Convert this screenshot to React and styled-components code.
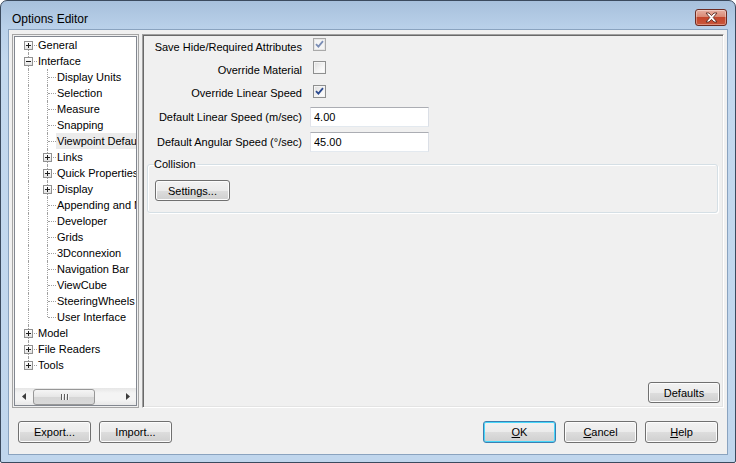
import React from 'react';
import styled, { createGlobalStyle } from 'styled-components';

const GlobalStyle = createGlobalStyle`
  html, body {
    margin: 0;
    padding: 0;
    background: #ffffff;
  }
  * {
    box-sizing: border-box;
  }
`;

const Window = styled.div`
  width: 736px;
  height: 463px;
  display: flex;
  flex-direction: column;
  padding: 0 7px 7px 7px;
  border: 1px solid #3b4a5e;
  border-radius: 7px 7px 2px 2px;
  background: linear-gradient(#a7c0dc 0, #bad1ea 28px, #c3d8ee 60px, #c0d6ed 100%);
  font-family: 'Liberation Sans', Arial, sans-serif;
  font-size: 11px;
  color: #000;
`;

const TitleBar = styled.div`
  height: 28px;
  display: flex;
  align-items: center;
  justify-content: space-between;
  padding: 0 0 0 4px;
`;

const Title = styled.div`
  font-size: 12px;
  color: #000;
  padding-top: 7px;
`;

const CloseButton = styled.div`
  width: 32px;
  height: 17px;
  margin-top: 5px;
  margin-right: 1px;
  border: 1px solid #6e2c22;
  border-radius: 3px;
  display: flex;
  align-items: center;
  justify-content: center;
  background: linear-gradient(#e7b0a2 0, #d98a76 45%, #c4462c 50%, #c9573c 100%);
  box-shadow: inset 0 0 0 1px rgba(255, 255, 255, 0.35);
`;

const Body = styled.div`
  flex: 1;
  display: flex;
  flex-direction: column;
  background: #f0f0f0;
  border: 1px solid #8aa3bf;
  padding: 4px 0 0 0;
`;

const Main = styled.div`
  flex: 1;
  display: flex;
  gap: 3px;
  padding: 0 3px;
  min-height: 0;
`;

const TreeFrame = styled.div`
  width: 127px;
  border: 1px solid #a5a5a5;
  padding: 1px;
  display: flex;
`;

const TreeInner = styled.div`
  flex: 1;
  border: 1px solid #828790;
  background: #fff;
  display: flex;
  flex-direction: column;
  overflow: hidden;
`;

const TreeList = styled.div`
  flex: 1;
  padding-left: 3px;
  overflow: hidden;
`;

const TreeRow = styled.div`
  height: 16px;
  display: flex;
  align-items: stretch;
  white-space: nowrap;
`;

const LineCell = styled.span`
  position: relative;
  flex: none;
  width: 19px;
  height: 16px;

  &::before {
    content: '';
    position: absolute;
    left: 10px;
    top: ${(p) => (p.$type === 'first' ? '8px' : '0')};
    height: ${(p) =>
      p.$type === 'none' ? '0' : p.$type === 'first' || p.$type === 'ell' ? '8px' : '16px'};
    border-left: 1px dotted #a0a0a0;
    display: ${(p) => (p.$type === 'none' ? 'none' : 'block')};
  }

  &::after {
    content: '';
    position: absolute;
    left: 11px;
    right: 0;
    top: 8px;
    border-top: 1px dotted #a0a0a0;
    display: ${(p) => (p.$type === 'pipe' || p.$type === 'none' ? 'none' : 'block')};
  }
`;

const Expander = styled.span`
  position: absolute;
  left: 6px;
  top: 4px;
  width: 9px;
  height: 9px;
  border: 1px solid #919191;
  background: linear-gradient(#ffffff, #e3e3e3);
  z-index: 1;

  &::before {
    content: '';
    position: absolute;
    left: 1px;
    top: 3px;
    width: 5px;
    height: 1px;
    background: #1e1e1e;
  }

  &::after {
    content: '';
    position: absolute;
    left: 3px;
    top: 1px;
    width: 1px;
    height: 5px;
    background: #1e1e1e;
    display: ${(p) => (p.$open ? 'none' : 'block')};
  }
`;

const TreeLabel = styled.span`
  padding: 0 2px 0 1px;
  line-height: 16px;
  background: ${(p) => (p.$selected ? '#ebebeb' : 'transparent')};
`;

const HScroll = styled.div`
  height: 17px;
  display: flex;
  background: linear-gradient(#e6e6e6, #f4f4f4 30%, #f4f4f4 70%, #e8e8e8);
  flex: none;
`;

const ScrollArrow = styled.span`
  width: 17px;
  display: flex;
  align-items: center;
  justify-content: center;
`;

const ScrollTrack = styled.div`
  flex: 1;
  display: flex;
  align-items: center;
  padding-left: 1px;
`;

const ScrollThumb = styled.div`
  width: 62px;
  height: 16px;
  border: 1px solid #979797;
  border-radius: 3px;
  background: linear-gradient(#f5f5f5, #e6e6e6 50%, #d6d6d6 51%, #d9d9d9);
  display: flex;
  align-items: center;
  justify-content: center;
  gap: 2px;
`;

const Grip = styled.span`
  width: 1px;
  height: 6px;
  background: #5e5e5e;
  box-shadow: 1px 0 0 #f6f6f6;
`;

const Panel = styled.div`
  flex: 1;
  display: flex;
  flex-direction: column;
  border: 1px solid;
  border-color: #a0a0a0 #ffffff #ffffff #a0a0a0;
  box-shadow: inset 1px 1px 0 #696969, inset -1px -1px 0 #e3e3e3;
  padding: 0 3px 4px 1px;
`;

const Form = styled.div`
  display: grid;
  grid-template-columns: 158px 1fr;
  grid-template-rows: 23px 23px 23px 25px 25px;
  column-gap: 8px;
  align-items: center;
`;

const FieldLabel = styled.label`
  text-align: right;
  white-space: nowrap;
  padding-top: 1px;
`;

const CheckBox = styled.span`
  align-self: start;
  width: 13px;
  height: 13px;
  margin: ${(p) => p.$top || 3}px 0 0 3px;
  border: 1px solid ${(p) => (p.$muted ? '#a9a9a9' : '#8e8f8f')};
  background: ${(p) =>
    p.$muted ? '#f4f4f4' : 'linear-gradient(135deg, #dcdcdc, #f6f6f6 60%, #ffffff)'};
  box-shadow: inset 0 0 0 1px ${(p) => (p.$muted ? '#e6e6e6' : '#f4f4f4')};
  display: flex;
  align-items: center;
  justify-content: center;
`;

const TextBox = styled.input`
  width: 119px;
  height: 20px;
  border: 1px solid;
  border-color: #abadb3 #dbdfe6 #e3e9ef #e2e3ea;
  padding: 0 3px;
  font-family: inherit;
  font-size: 11px;
  color: #000;
  background: #fff;
  outline: none;
`;

const Group = styled.fieldset`
  margin: 4px 2px 0 3px;
  padding: 10px 7px 11px 7px;
  border: 1px solid #d5dfe5;
  border-radius: 3px;
  box-shadow: inset 1px 1px 0 #fff, 1px 1px 0 #fff;
`;

const Legend = styled.legend`
  padding: 0 1px 0 0;
  margin-left: -1px;
`;

const Button = styled.button`
  width: ${(p) => p.$w || 73}px;
  height: ${(p) => p.$h || 22}px;
  border: 1px solid ${(p) => (p.$default ? '#3c7fb1' : '#707070')};
  border-radius: 3px;
  background: linear-gradient(#f2f2f2 0, #ebebeb 50%, #dddddd 51%, #cfcfcf 100%);
  box-shadow: inset 0 0 0 1px ${(p) => (p.$default ? '#48d7fa' : '#fcfcfc')};
  font-family: inherit;
  font-size: 11px;
  color: #000;
  padding: 0;
  flex: none;

  u {
    text-decoration: underline;
    text-underline-offset: 1px;
  }
`;

const PanelFooter = styled.div`
  margin-top: auto;
  display: flex;
  justify-content: flex-end;
`;

const Footer = styled.div`
  display: flex;
  align-items: center;
  padding: 13px 9px 11px 9px;
  gap: 8px;
`;

const Spacer = styled.div`
  flex: 1;
`;

const tree = [
  { label: 'General', lines: ['first'], box: 'closed' },
  { label: 'Interface', lines: ['tee'], box: 'open' },
  { label: 'Display Units', lines: ['pipe', 'tee'] },
  { label: 'Selection', lines: ['pipe', 'tee'] },
  { label: 'Measure', lines: ['pipe', 'tee'] },
  { label: 'Snapping', lines: ['pipe', 'tee'] },
  { label: 'Viewpoint Defaults', lines: ['pipe', 'tee'], selected: true },
  { label: 'Links', lines: ['pipe', 'tee'], box: 'closed' },
  { label: 'Quick Properties', lines: ['pipe', 'tee'], box: 'closed' },
  { label: 'Display', lines: ['pipe', 'tee'], box: 'closed' },
  { label: 'Appending and Merging', lines: ['pipe', 'tee'] },
  { label: 'Developer', lines: ['pipe', 'tee'] },
  { label: 'Grids', lines: ['pipe', 'tee'] },
  { label: '3Dconnexion', lines: ['pipe', 'tee'] },
  { label: 'Navigation Bar', lines: ['pipe', 'tee'] },
  { label: 'ViewCube', lines: ['pipe', 'tee'] },
  { label: 'SteeringWheels', lines: ['pipe', 'tee'] },
  { label: 'User Interface', lines: ['pipe', 'ell'] },
  { label: 'Model', lines: ['tee'], box: 'closed' },
  { label: 'File Readers', lines: ['tee'], box: 'closed' },
  { label: 'Tools', lines: ['ell'], box: 'closed' },
];

const CheckMark = ({ color }) => (
  <svg width="9" height="9" viewBox="0 0 9 9">
    <path d="M1 4.2 L3.4 6.6 L8 1.2" fill="none" stroke={color} strokeWidth="1.8" />
  </svg>
);

const CloseGlyph = () => (
  <svg width="13" height="11" viewBox="0 0 13 11">
    <path
      d="M1 1 H4 L6.5 3.6 L9 1 H12 L8.2 5.5 L12 10 H9 L6.5 7.4 L4 10 H1 L4.8 5.5 Z"
      fill="#ffffff"
      stroke="#5a2a22"
      strokeWidth="0.9"
      strokeLinejoin="round"
    />
  </svg>
);

const Arrow = ({ dir }) => (
  <svg width="4" height="7" viewBox="0 0 4 7">
    <path d={dir === 'left' ? 'M4 0 L0 3.5 L4 7 Z' : 'M0 0 L4 3.5 L0 7 Z'} fill="#3c3c3c" />
  </svg>
);

const Tree = () => (
  <TreeFrame>
    <TreeInner>
      <TreeList>
        {tree.map((item) => (
          <TreeRow key={item.label}>
            {item.lines.map((type, i) => (
              <LineCell key={i} $type={type}>
                {i === item.lines.length - 1 && item.box && (
                  <Expander $open={item.box === 'open'} />
                )}
              </LineCell>
            ))}
            <TreeLabel $selected={item.selected}>{item.label}</TreeLabel>
          </TreeRow>
        ))}
      </TreeList>
      <HScroll>
        <ScrollArrow>
          <Arrow dir="left" />
        </ScrollArrow>
        <ScrollTrack>
          <ScrollThumb>
            <Grip />
            <Grip />
            <Grip />
          </ScrollThumb>
        </ScrollTrack>
        <ScrollArrow>
          <Arrow dir="right" />
        </ScrollArrow>
      </HScroll>
    </TreeInner>
  </TreeFrame>
);

export default function App() {
  return (
    <>
      <GlobalStyle />
      <Window>
        <TitleBar>
          <Title>Options Editor</Title>
          <CloseButton>
            <CloseGlyph />
          </CloseButton>
        </TitleBar>
        <Body>
          <Main>
            <Tree />
            <Panel>
              <Form>
                <FieldLabel>Save Hide/Required Attributes</FieldLabel>
                <CheckBox $muted>
                  <CheckMark color="#7a8db5" />
                </CheckBox>
                <FieldLabel>Override Material</FieldLabel>
                <CheckBox />
                <FieldLabel>Override Linear Speed</FieldLabel>
                <CheckBox $top={4}>
                  <CheckMark color="#2b4a8f" />
                </CheckBox>
                <FieldLabel>Default Linear Speed (m/sec)</FieldLabel>
                <TextBox defaultValue="4.00" />
                <FieldLabel>Default Angular Speed (°/sec)</FieldLabel>
                <TextBox defaultValue="45.00" />
              </Form>
              <Group>
                <Legend>Collision</Legend>
                <Button $w={75} $h={21}>Settings...</Button>
              </Group>
              <PanelFooter>
                <Button $w={72} $h={21}>Defaults</Button>
              </PanelFooter>
            </Panel>
          </Main>
          <Footer>
            <Button>Export...</Button>
            <Button>Import...</Button>
            <Spacer />
            <Button $default>
              <u>O</u>K
            </Button>
            <Button>
              <u>C</u>ancel
            </Button>
            <Button>
              <u>H</u>elp
            </Button>
          </Footer>
        </Body>
      </Window>
    </>
  );
}
